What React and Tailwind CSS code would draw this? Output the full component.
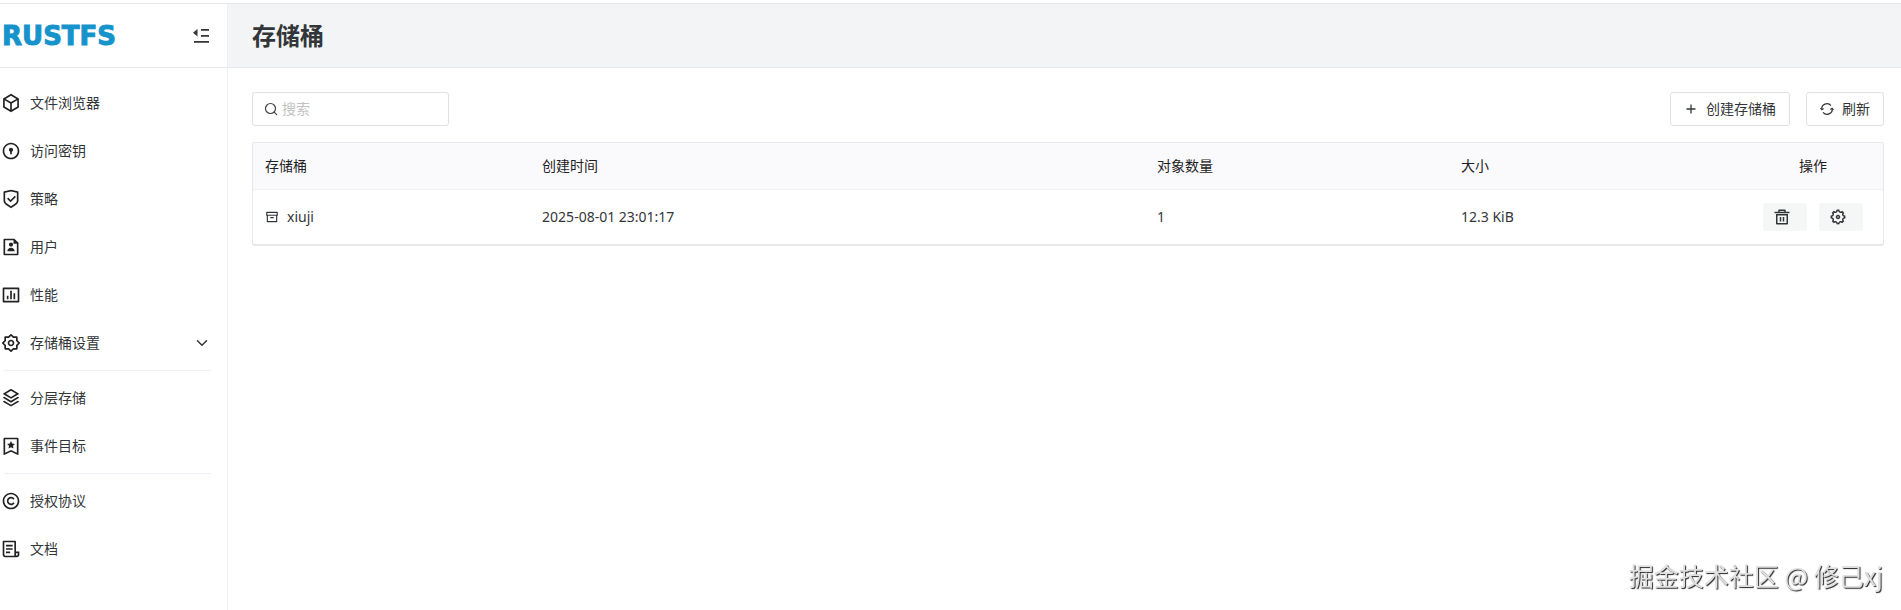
import { useState } from 'react';
import {
  RiBox3Line,
  RiDoorLockLine,
  RiShieldCheckLine,
  RiFileUserLine,
  RiBarChartBoxLine,
  RiSettings2Line,
  RiSettings5Line,
  RiStackLine,
  RiBookmark3Line,
  RiCopyrightLine,
  RiFileList3Line,
  RiArchiveLine,
  RiDeleteBin5Line,
} from 'react-icons/ri';
import { IoChevronDown } from 'react-icons/io5';

const menu = [
  [
    { label: '文件浏览器', icon: RiBox3Line },
    { label: '访问密钥', icon: RiDoorLockLine },
    { label: '策略', icon: RiShieldCheckLine },
    { label: '用户', icon: RiFileUserLine },
    { label: '性能', icon: RiBarChartBoxLine },
    { label: '存储桶设置', icon: RiSettings2Line, children: true },
  ],
  [
    { label: '分层存储', icon: RiStackLine },
    { label: '事件目标', icon: RiBookmark3Line },
  ],
  [
    { label: '授权协议', icon: RiCopyrightLine },
    { label: '文档', icon: RiFileList3Line },
  ],
];

const buckets = [{ name: 'xiuji', createdAt: '2025-08-01 23:01:17', objects: 1, size: '12.3 KiB' }];

function Logo() {
  return (
    <a
      href="#"
      className="pt-0.5 font-['DejaVu_Sans',sans-serif] text-[26px] font-bold text-[#1793cc] [-webkit-text-stroke:1px_#1793cc]"
    >
      RUSTFS
    </a>
  );
}

function FoldIcon() {
  return (
    <svg viewBox="0 0 20 20" className="size-5" fill="currentColor">
      <path d="M10 3h8v1.800h-8zM10 9h8v1.800h-8zM3 15h15v1.800H3zM6.500 3v7.600L2 6.800z" />
    </svg>
  );
}

function SearchIcon() {
  return (
    <svg viewBox="0 0 16 16" className="size-4 text-[#444]" fill="none" stroke="currentColor" strokeWidth="1.200">
      <circle cx="7.500" cy="7.500" r="5" />
      <path d="M11.200 11.200l2.500 2.500" strokeLinecap="round" />
    </svg>
  );
}

function RefreshIcon() {
  return (
    <svg viewBox="0 0 16 16" className="size-4" fill="none" stroke="currentColor" strokeWidth="1.200">
      <path d="M2.800 8.500A5.200 5.200 0 0 1 12 4.600M13.200 7.500A5.200 5.200 0 0 1 4 11.400" />
      <path d="M1.500 7.200l1.400 1.600 1.700-1.300M14.500 8.800l-1.400-1.600-1.700 1.300" />
    </svg>
  );
}

function Sidebar() {
  return (
    <aside className="w-57 shrink-0 border-r border-[#efeff5]">
      <div className="flex h-16 items-center justify-between border-b border-gray-200 pl-0.5 pr-4">
        <Logo />
        <button type="button" aria-label="收起菜单">
          <FoldIcon />
        </button>
      </div>
      <nav className="flex flex-col gap-1.5 pt-3.5">
        {menu.map((group, i) => (
          <div key={i} className="flex flex-col gap-1.5">
            {i > 0 && <hr className="ml-1 mr-4 border-[#efeff5]" />}
            {group.map(({ label, icon: Icon, children }) => (
              <a key={label} href="#" className="flex h-[42px] items-center gap-[9px] pl-px pr-[17px]">
                <Icon className="size-5 text-[#222]" />
                <span className="flex-1">{label}</span>
                {children && <IoChevronDown className="size-4" />}
              </a>
            ))}
          </div>
        ))}
      </nav>
    </aside>
  );
}

export default function App() {
  const [search, setSearch] = useState('');
  const rows = buckets.filter((b) => b.name.includes(search));

  return (
    <div className="min-h-screen bg-white pt-[3px] font-['Noto_Sans','Noto_Sans_CJK_SC',sans-serif] text-sm text-[#333639]">
      <div className="flex min-h-[calc(100vh-3px)] border-t border-gray-200">
        <Sidebar />
        <main className="min-w-0 flex-1">
          <header className="flex h-16 items-center border-b border-gray-200 bg-[#f3f4f6] px-6">
            <h1 className="text-2xl font-bold">存储桶</h1>
          </header>

          <div className="flex items-center justify-between pb-4 pl-6 pr-[17px] pt-6">
            <label className="flex h-[34px] w-[197px] items-center gap-[3px] rounded-[3px] border border-[#e0e0e6] px-2.5">
              <SearchIcon />
              <input
                type="text"
                aria-label="搜索"
                placeholder="搜索"
                value={search}
                onChange={(e) => setSearch(e.target.value)}
                className="min-w-0 flex-1 outline-none placeholder:text-[#c2c2c2]"
              />
            </label>
            <div className="flex gap-4">
              <button type="button" className="flex h-[34px] items-center gap-[7px] rounded-[3px] border border-[#e0e0e6] pl-3 pr-[13px]">
                <svg viewBox="0 0 16 16" className="size-4" stroke="currentColor" strokeWidth="1.300">
                  <path d="M8 3.500v9M3.500 8h9" />
                </svg>
                创建存储桶
              </button>
              <button type="button" className="flex h-[34px] items-center gap-[7px] rounded-[3px] border border-[#e0e0e6] pl-3 pr-[13px]">
                <RefreshIcon />
                刷新
              </button>
            </div>
          </div>

          <div className="ml-6 mr-[17px] overflow-hidden rounded-[3px] border border-b-2 border-[#e8e8ec]">
            <table className="w-full table-fixed text-left">
              <thead className="bg-[#fafafc] text-[#1f2225]">
                <tr className="h-[46px] border-b border-[#efeff5]">
                  <th className="w-[17%] px-3 font-normal">存储桶</th>
                  <th className="px-3 font-normal">创建时间</th>
                  <th className="w-[304px] px-3 font-normal">对象数量</th>
                  <th className="w-[294px] px-3 font-normal">大小</th>
                  <th className="w-[140px] px-3 text-center font-normal">操作</th>
                </tr>
              </thead>
              <tbody>
                {rows.map((b) => (
                  <tr key={b.name} className="h-[55px]">
                    <td className="px-3">
                      <a href="#" className="flex items-center gap-2">
                        <RiArchiveLine className="size-3.5" />
                        {b.name}
                      </a>
                    </td>
                    <td className="px-3">{b.createdAt}</td>
                    <td className="px-3">{b.objects}</td>
                    <td className="px-3">{b.size}</td>
                    <td className="px-3">
                      <div className="flex justify-center gap-3">
                        <button type="button" aria-label="删除" className="flex h-7 w-11 items-center rounded-[3px] bg-[#f5f6f6] px-2.5">
                          <RiDeleteBin5Line className="size-[18px]" />
                        </button>
                        <button type="button" aria-label="设置" className="flex h-7 w-11 items-center rounded-[3px] bg-[#f5f6f6] px-2.5">
                          <RiSettings5Line className="size-[18px]" />
                        </button>
                      </div>
                    </td>
                  </tr>
                ))}
              </tbody>
            </table>
          </div>
        </main>
      </div>
      <p className="fixed bottom-4 right-[18px] font-['Noto_Sans_CJK_SC',sans-serif] text-[25px] text-[#e0e0e0] [text-shadow:1px_1px_1px_#222]">
        掘金技术社区 @ 修己xj
      </p>
    </div>
  );
}
